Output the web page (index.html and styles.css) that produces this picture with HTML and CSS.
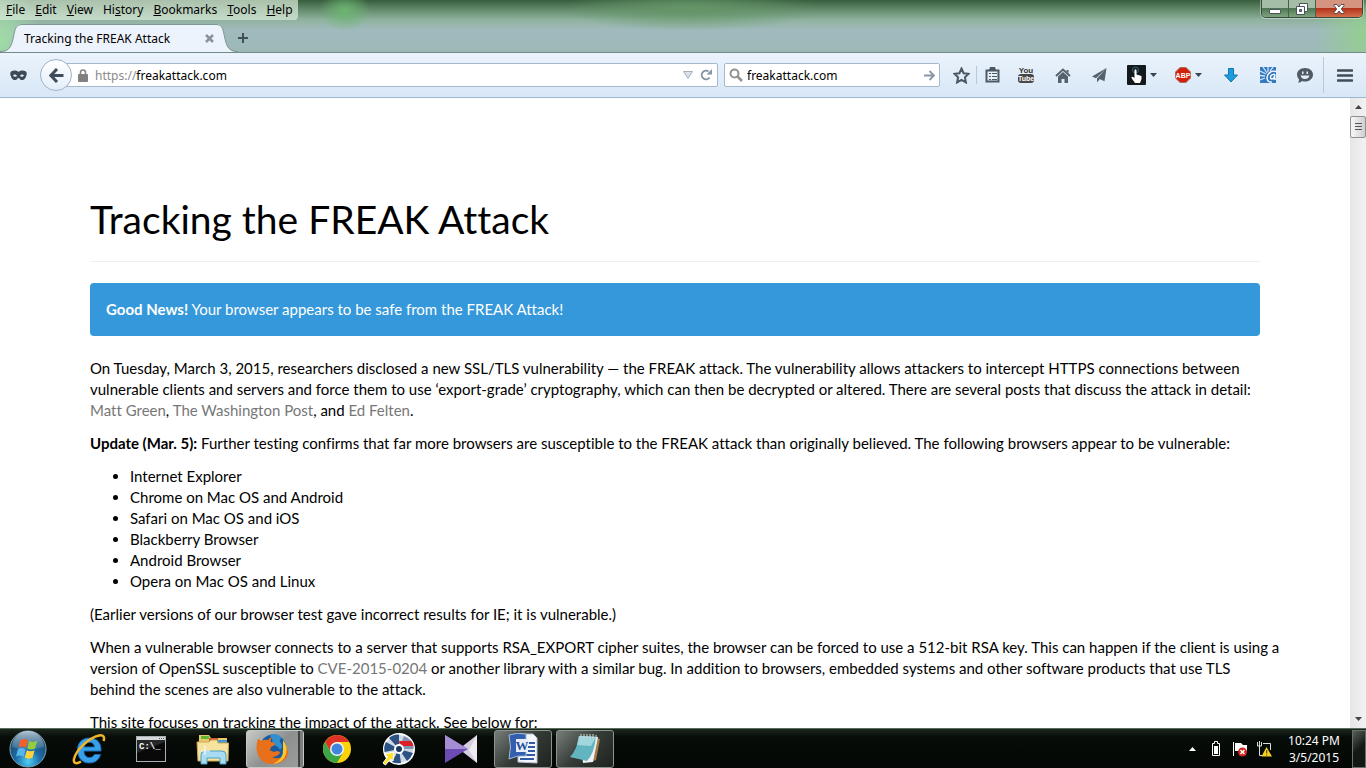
FILE: index.html
```
<!DOCTYPE html>
<html lang="en">
<head>
    <meta charset="utf-8">
    <title>Tracking the FREAK Attack</title>
    <link rel="stylesheet" href="styles.css">
</head>
<body>
    <header class="titlebar">
        <div class="title-row">
            <nav class="menubar">
                <button class="menu-item"><u>F</u>ile</button>
                <button class="menu-item"><u>E</u>dit</button>
                <button class="menu-item"><u>V</u>iew</button>
                <button class="menu-item">Hi<u>s</u>tory</button>
                <button class="menu-item"><u>B</u>ookmarks</button>
                <button class="menu-item"><u>T</u>ools</button>
                <button class="menu-item"><u>H</u>elp</button>
            </nav>
            <div class="window-controls">
                <button class="win-btn" aria-label="Minimize">
                    <svg width="14" height="12" viewBox="0 0 14 12"><rect x="1.500" y="6.500" width="11" height="4" rx="0.500" fill="#fff" stroke="#4a5560"/></svg>
                </button>
                <button class="win-btn" aria-label="Restore">
                    <svg width="14" height="14" viewBox="0 0 14 14"><path d="M4.500 1.500h8v8h-8z" fill="#fff" stroke="#4a5560"/><path d="M1.500 4.500h8v8h-8z" fill="#fff" stroke="#4a5560"/><path d="M4.500 7.500h2v2h-2z" fill="#6f9070" stroke="#4a5560"/></svg>
                </button>
                <button class="win-btn win-close" aria-label="Close">
                    <svg width="14" height="12" viewBox="0 0 14 12"><path d="M2 1.500h3l2 2.500 2-2.500h3v1L9.300 6l2.700 3.500v1H9L7 8l-2 2.500H2v-1L4.700 6 2 2.500z" fill="#fff" stroke="#5a4a50"/></svg>
                </button>
            </div>
        </div>
        <div class="tabs">
            <div class="tab">
                <svg class="tab-curve" width="22" height="28" viewBox="0 0 22 28"><path d="M0 28C8 28 11 24 13 15S15 0 22 0V28z" fill="#edf3fc"/><path d="M0 27.500C8 27.500 11 24 13 15S15 .5 22 .5" fill="none" stroke="#7d9792"/></svg>
                <div class="tab-body">
                    <span class="tab-title">Tracking the FREAK Attack</span>
                    <button class="tab-close" aria-label="Close tab">
                        <svg width="9" height="9" viewBox="0 0 9 9"><path d="M1 1l7 7M8 1l-7 7" stroke="#8a919b" stroke-width="2.500"/></svg>
                    </button>
                </div>
                <svg class="tab-curve" width="22" height="28" viewBox="0 0 22 28"><path d="M22 28C14 28 11 24 9 15S7 0 0 0V28z" fill="#edf3fc"/><path d="M22 27.500C14 27.500 11 24 9 15S7 .5 0 .5" fill="none" stroke="#7d9792"/></svg>
            </div>
            <button class="new-tab" aria-label="New tab">
                <svg width="10" height="10" viewBox="0 0 10 10"><path d="M5 0v10M0 5h10" stroke="#3f5058" stroke-width="2"/></svg>
            </button>
        </div>
    </header>

    <div class="toolbar">
        <div class="private">
            <svg width="17" height="11" viewBox="0 0 17 11"><path fill-rule="evenodd" d="M1 1.500C4 0 7 .5 8.500 2 10 .5 13 0 16 1.500c1 1 1 3 0 5-1 3-3 4-5 3.500C9.800 9.600 9.500 8 8.500 8S7.200 9.600 6 10C4 10.500 2 9.500 1 6.500 0 4.500 0 2.500 1 1.500zM3 5.500c1 1.500 3 1.700 4 .5C6 4 4 4 3 5.500zM10 6c1 1.200 3 1 4-.5-1-1.500-3-1.500-4 .5z" fill="#3f4a54"/></svg>
        </div>
        <button class="back" aria-label="Back">
            <svg width="15" height="15" viewBox="0 0 15 15"><path d="M8 1L1.800 7.500 8 14M2 7.500h12.500" fill="none" stroke="#3f4c59" stroke-width="3"/></svg>
        </button>
        <div class="field url-field">
            <svg width="10" height="13" viewBox="0 0 10 13"><path d="M2.500 6V3.500a2.500 2.500 0 0 1 5 0V6" fill="none" stroke="#858585" stroke-width="1.600"/><rect y="5" width="10" height="8" rx="1" fill="#808080"/></svg>
            <div class="address">
                <label class="scheme" for="url">https://</label>
                <input id="url" type="text" value="freakattack.com">
            </div>
            <button aria-label="Show history"><svg width="10" height="8" viewBox="0 0 10 8"><path d="M.5 .5h9L5 7.500z" fill="#dbe1e8" stroke="#a3afbb"/></svg></button>
            <button aria-label="Reload"><svg width="12" height="12" viewBox="0 0 12 12"><path d="M9.500 8.500A4.300 4.300 0 1 1 8.500 2.500" fill="none" stroke="#8796a5" stroke-width="2"/><path d="M6.500 5.500H12V0z" fill="#8796a5"/></svg></button>
        </div>
        <div class="field search-field">
            <svg width="14" height="14" viewBox="0 0 14 14"><circle cx="5.500" cy="5.500" r="4" fill="none" stroke="#919191" stroke-width="2"/><path d="M8.500 8.500l4.500 4.500" stroke="#919191" stroke-width="2.500"/></svg>
            <input id="search" type="text" value="freakattack.com" aria-label="Search">
            <button aria-label="Go"><svg width="11" height="11" viewBox="0 0 11 11"><path d="M0 5.500h9M5.500 1L10 5.500 5.500 10" fill="none" stroke="#8796a5" stroke-width="1.800"/></svg></button>
        </div>
        <button class="tool tool-small" aria-label="Bookmark this page">
            <svg width="17" height="17" viewBox="0 0 17 17"><path d="M8.500 1.500l2.100 4.700 5 .6-3.700 3.500 1 5.100-4.400-2.500-4.400 2.500 1-5.100L1.400 6.800l5-.6z" fill="none" stroke="#4c5864" stroke-width="2"/></svg>
        </button>
        <span class="divider"></span>
        <button class="tool tool-small" aria-label="Bookmarks">
            <svg width="15" height="16" viewBox="0 0 15 16"><path d="M1.500 3.500h12v11h-12z" fill="#e6eef8" stroke="#4c5864" stroke-width="2"/><path d="M4 3l1-3h5l1 3zM4 6h2v1H4zM4 9h2v1H4zM4 12h2v1H4zM7 6h5v1H7zM7 9h5v1H7zM7 12h5v1H7z" fill="#4c5864"/></svg>
        </button>
        <button class="tool" aria-label="YouTube">
            <svg width="18" height="18" viewBox="0 0 18 18"><rect x="1" y="8" width="16" height="9" rx="3" fill="#484848"/><text x="9" y="7" class="glyph glyph-you">You</text><text x="9" y="15" class="glyph glyph-tube">Tube</text></svg>
        </button>
        <button class="tool" aria-label="Home">
            <svg width="16" height="15" viewBox="0 0 16 15"><path d="M1 8l7-6.500L15 8" fill="none" stroke="#55616d" stroke-width="2"/><path d="M3 8.500L8 4l5 4.500V15H9.500v-4h-3v4H3zM11.500 2h2v3l-2-1.500z" fill="#55616d"/></svg>
        </button>
        <button class="tool" aria-label="Send page">
            <svg width="15" height="16" viewBox="0 0 15 16"><path d="M14.500 1L0 9.500l4 1.700zM14.500 1L5 11.500V15.500l2.200-2.800zM14.500 1L7 11.800l5.500 2.500z" fill="#55616d"/></svg>
        </button>
        <button class="tool tool-menu" aria-label="Hand tool">
            <svg width="19" height="20" viewBox="0 0 19 20"><rect width="19" height="20" rx="1" fill="#15191c"/><circle cx="8.500" cy="5" r="3" fill="none" stroke="#286c7d"/><path d="M7.500 5q1-1.500 2 0v4.500l5 1.500v3l-1.500 4H8l-3.500-5q0-2 1.500-1l1.500 1z" fill="#fff"/></svg>
            <svg width="7" height="4" viewBox="0 0 7 4"><path d="M0 0h7L3.500 4z" fill="#3b444d"/></svg>
        </button>
        <button class="tool tool-menu" aria-label="Adblock Plus">
            <svg width="16" height="16" viewBox="0 0 16 16"><path d="M5 .5h6L15.500 5v6L11 15.500H5L.5 11V5z" fill="#cf210b" stroke="#a96a60"/><text x="8" y="11" class="glyph glyph-abp">ABP</text></svg>
            <svg width="7" height="4" viewBox="0 0 7 4"><path d="M0 0h7L3.500 4z" fill="#3b444d"/></svg>
        </button>
        <button class="tool" aria-label="Downloads">
            <svg width="14" height="15" viewBox="0 0 14 15"><path d="M4.500 .5h5v6.500h4L7 14 .5 7h4z" fill="#1d9be0" stroke="#1274ad"/></svg>
        </button>
        <button class="tool" aria-label="Mail checker">
            <svg width="16" height="16" viewBox="0 0 16 16"><rect width="16" height="16" fill="#3579c2"/><path d="M0 4l6 3M3 0l4 6M8 0v5M13 0l-3 4M0 8.500l5 .5M0 13l5-2" stroke="#cfe2f5" stroke-width="1.300"/><path d="M16 4.500C11 3 7 7 7 10.500S9 15.500 12 15M15 7.500c-3-.5-4.500 1-4.500 3s2.500 2 3.500 0l1-3-.7 4.500H16" fill="none" stroke="#fff" stroke-width="1.400"/></svg>
        </button>
        <button class="tool" aria-label="Hello">
            <svg width="16" height="15" viewBox="0 0 16 15"><path d="M8 0c4.500 0 8 2.800 8 6.700S12.500 13.500 8 13.500q-1.500 0-3-.5-1.500 2-4 1.500 1.300-1.300 1-3Q0 9.500 0 6.700C0 2.800 3.500 0 8 0z" fill="#4f5a65"/><path d="M5 3.500h1.500V6H5zM9.500 3.500H11V6H9.500zM3.500 7.500h9q-1 3.500-4.500 3.500T3.500 7.500z" fill="#e4edf7"/></svg>
        </button>
        <span class="divider divider-tall"></span>
        <button class="tool tool-app" aria-label="Open menu">
            <svg width="16" height="13" viewBox="0 0 16 13"><path d="M1 1.500h14M1 6.500h14M1 11.500h14" stroke="#414c57" stroke-width="2.600" stroke-linecap="round"/></svg>
        </button>
    </div>

    <div class="viewport">
        <main class="page">
            <div class="container">
                <h1>Tracking the FREAK Attack</h1>
                <div class="alert"><strong>Good News!</strong> Your browser appears to be safe from the FREAK Attack!</div>
                <p>On Tuesday, March 3, 2015, researchers disclosed a new SSL/TLS vulnerability — the FREAK attack. The vulnerability allows attackers to intercept HTTPS connections between vulnerable clients and servers and force them to use ‘export-grade’ cryptography, which can then be decrypted or altered. There are several posts that discuss the attack in detail: <a href="#">Matt Green</a>, <a href="#">The Washington Post</a>, and <a href="#">Ed Felten</a>.</p>
                <p><strong>Update (Mar. 5):</strong> Further testing confirms that far more browsers are susceptible to the FREAK attack than originally believed. The following browsers appear to be vulnerable:</p>
                <ul>
                    <li>Internet Explorer</li>
                    <li>Chrome on Mac OS and Android</li>
                    <li>Safari on Mac OS and iOS</li>
                    <li>Blackberry Browser</li>
                    <li>Android Browser</li>
                    <li>Opera on Mac OS and Linux</li>
                </ul>
                <p>(Earlier versions of our browser test gave incorrect results for IE; it is vulnerable.)</p>
                <p>When a vulnerable browser connects to a server that supports RSA_EXPORT cipher suites, the browser can be forced to use a 512-bit RSA key. This can happen if the client is using a version of OpenSSL susceptible to <a href="#">CVE-2015-0204</a> or another library with a similar bug. In addition to browsers, embedded systems and other software products that use TLS<br>behind the scenes are also vulnerable to the attack.</p>
                <p>This site focuses on tracking the impact of the attack. See below for:</p>
            </div>
        </main>
        <div class="scrollbar">
            <button class="scroll-arrow" aria-label="Scroll up"><svg width="7" height="4" viewBox="0 0 7 4"><path d="M0 4h7L3.500 0z" fill="#444"/></svg></button>
            <div class="scroll-thumb"><svg width="7" height="8" viewBox="0 0 7 8"><path d="M0 .5h7M0 3.500h7M0 6.500h7" stroke="#555"/></svg></div>
            <button class="scroll-arrow scroll-down" aria-label="Scroll down"><svg width="7" height="4" viewBox="0 0 7 4"><path d="M0 0h7L3.500 4z" fill="#444"/></svg></button>
        </div>
    </div>

    <footer class="taskbar">
        <button class="start" aria-label="Start">
            <svg width="38" height="38" viewBox="0 0 38 38">
                <defs>
                    <radialGradient id="orb" cx="50%" cy="85%" r="75%"><stop offset="0" stop-color="#4fd0f5"/><stop offset=".45" stop-color="#1d6da8"/><stop offset="1" stop-color="#1c4263"/></radialGradient>
                    <linearGradient id="gloss" x1="0" y1="0" x2="0" y2="1"><stop offset="0" stop-color="#d5e4ec" stop-opacity=".8"/><stop offset="1" stop-color="#9fc4d8" stop-opacity=".2"/></linearGradient>
                </defs>
                <circle cx="19" cy="19" r="18" fill="url(#orb)" stroke="#7fa5b8"/>
                <path d="M3 17a16 16 0 0 1 32 0q-16 5-32 0z" fill="url(#gloss)"/>
                <path d="M11.500 10q4-2 7.500.5l-2 7.500q-3.500-2.500-7.500-.5z" fill="#f0602a"/>
                <path d="M20.300 11q4 2 8-.2l-2.300 7.700q-4 2-7.700-.3z" fill="#93ce3d"/>
                <path d="M9 19q4-2 7.500.5L14.500 27q-3.500-2.500-7.500-.5z" fill="#57b5ee"/>
                <path d="M17.900 20.200q3.700 2 7.700 0L23.500 27.700q-4 2-7.700-.2z" fill="#ffd23b"/>
            </svg>
        </button>
        <button class="task" aria-label="Internet Explorer">
            <svg width="34" height="32" viewBox="0 0 34 32"><path d="M29 18H12c0 4 2 6.500 5.500 6.500 2.300 0 4-1 5-3h6C27 27 23 30 17 30 10 30 5.500 24.500 5.500 17S10.500 5 17.500 5C25 5 29.500 10 29 18zM12 14h10.500c-.3-3-2-4.700-5-4.700S12.500 11 12 14z" fill="#39a1ea" stroke="#1d68b5"/><path d="M31.500 8C33 4 31.500 1.500 27 2.500 17 4.500 4 17 2 26c-1 5 3 5 7 2.500" fill="none" stroke="#efb526" stroke-width="2.500"/></svg>
        </button>
        <button class="task" aria-label="Command Prompt">
            <svg width="30" height="26" viewBox="0 0 30 26"><rect x=".5" y=".5" width="29" height="25" fill="#090909" stroke="#a9afb5"/><path d="M1 1h28v3H1z" fill="#d5d8db"/><path d="M23 2.500h1M25 2.500h1M27 2.500h1" stroke="#555"/><path d="M1 17L29 6V4H1z" fill="#555" opacity=".4"/><text x="3" y="13" class="glyph glyph-cmd">C:\_</text></svg>
        </button>
        <button class="task" aria-label="Windows Explorer">
            <svg width="34" height="32" viewBox="0 0 34 32"><path d="M3 5V2h10l2 3h16v23H2z" fill="#e8c96e"/><path d="M5 3h8v3H5z" fill="#5fb832"/><path d="M13 5h9v3h-9z" fill="#d6592d"/><path d="M21 7h10v3H21z" fill="#4298d0"/><path d="M1 9h12l2-2h6l1 3h10.500L32 28H2z" fill="#f6e3a0" stroke="#cda950"/><path d="M5 31V22q0-4 4-4h17q4 0 4 4v9h-6v-6H11v6z" fill="#a8dcf2" stroke="#4f9fc2"/><path d="M9 13v9M5 18h9" stroke="#fff" stroke-width="1"/></svg>
        </button>
        <button class="task task-current" aria-label="Firefox">
            <svg width="32" height="32" viewBox="0 0 32 32"><circle cx="17" cy="14.500" r="13" fill="#195b9e"/><path d="M14 2q7-3 12 3-3 1-2 4 4 4 0 8-3-5-7-5 0-5-3-10z" fill="#338fcf"/><path d="M2 6q1 0 3 2 3-2 7-1 1-2 4-3-2 3-1 5 3 0 4 2-1 2-4 3l-1 3q3 3 7 1 3 0 3 2-3 4-8 4 8 4 13-4 2-4 0-9 3 3 2 8 1-2 1-6 2 8-3 13.500Q24 31 16 31 6 31 2 22-1 14 2 6z" fill="#e8701a"/><path d="M27 7q5 6 3 14-3 9-13 10 11-5 10-15z" fill="#fac92e"/></svg>
            <span class="stack"></span>
        </button>
        <button class="task" aria-label="Chrome">
            <svg width="30" height="30" viewBox="0 0 30 30"><circle cx="15" cy="15" r="14" fill="#fcd20a"/><path d="M2.900 8A14 14 0 0 1 27.100 8H15L9 18.500z" fill="#df3224"/><path d="M2.900 8A14 14 0 0 0 15 29l6-10.500L15 22l-6-3.500z" fill="#3aa648"/><circle cx="15" cy="15" r="7" fill="#f4f4f4"/><circle cx="15" cy="15" r="5.500" fill="#3f86dd"/></svg>
        </button>
        <button class="task" aria-label="Disc tool">
            <svg width="34" height="34" viewBox="0 0 34 34"><circle cx="17" cy="17" r="15" fill="#cfd9e4" stroke="#fff" stroke-width="2"/><path d="M17 17L7 6q4-4 10-3.500zM17 17L2.500 20q-1-6 1.500-10zM17 17l14 4q-2 5-6 8zM17 17l2 14q-5 1-9-1z" fill="#2c5285"/><path d="M17 17l5-13q8 3 9.500 10v3z" fill="#8195b0"/><path d="M17 9h12q2 2 2.500 5H18z" fill="#dc1f26"/><circle cx="17" cy="17" r="5" fill="#fff"/><circle cx="17" cy="17" r="3" fill="#1b3763"/><path d="M3 22l9-2-1 9-2.500-2-5 6L1 31l4.500-6z" fill="#ffe02a" stroke="#fff"/></svg>
        </button>
        <button class="task" aria-label="Media player">
            <svg width="34" height="28" viewBox="0 0 34 28"><path d="M33 0v28L15 14z" fill="#d5cde0"/><path d="M33 0v28l-8-13z" fill="#eee9f3"/><path d="M1 0l23 14L1 28z" fill="#6c4bb4"/><path d="M1 0l23 14H1z" fill="#a48dd3"/></svg>
        </button>
        <button class="task task-open" aria-label="Word">
            <svg width="34" height="32" viewBox="0 0 34 32"><path d="M12 1h15l4 4v25l-19-1z" fill="#f4f6fa" stroke="#b5c2d6"/><path d="M23 10h6M22 14h7M21 18h8M14 22h15M14 26h14" stroke="#315aa5" stroke-width="2"/><path d="M3 2q8-3 17-1v22q-9-1-17 3 3-12 0-24z" fill="#345faf" stroke="#a1bcdf"/><rect x="10" y="6" width="12" height="13" fill="#e7eefa"/><text x="16" y="17" class="glyph glyph-word">W</text></svg>
        </button>
        <button class="task task-open" aria-label="Notepad">
            <svg width="34" height="32" viewBox="0 0 34 32"><path d="M28 5l4 1-4 21-5 2z" fill="#a57d4a"/><path d="M12 3l18 1-5 25-10 1z" fill="#edf2f4"/><path d="M11 3l17 1q-2 17-9 24L2 24Q9 17 11 3z" fill="#62b5c0"/><path d="M11 3l17 1-5 9-14-1z" fill="#a0d6dc"/><path d="M13 1v4M16 1v4M19 1v4M22 1v4M25 1v4M28 2v4" stroke="#d5d8da"/></svg>
        </button>
        <div class="tray">
            <button class="tray-btn" aria-label="Show hidden icons"><svg width="7" height="4" viewBox="0 0 7 4"><path d="M0 4h7L3.500 0z" fill="#fff"/></svg></button>
            <button class="tray-btn" aria-label="Battery"><svg width="10" height="15" viewBox="0 0 10 15"><path d="M1.500 2.500h2v-2h3v2h2v12h-7z" fill="none" stroke="#fff"/><path d="M3 5h4v8H3z" fill="#fff"/></svg></button>
            <button class="tray-btn" aria-label="Action Center"><svg width="16" height="16" viewBox="0 0 16 16"><path d="M1.500 1v14" stroke="#fff"/><path d="M3 2h6l2 2h4v6H3z" fill="#fff"/><circle cx="10.500" cy="11" r="4.500" fill="#d3261f"/><path d="M8.500 9l4 4M12.500 9l-4 4" stroke="#fff" stroke-width="1.500"/></svg></button>
            <button class="tray-btn" aria-label="Network"><svg width="16" height="16" viewBox="0 0 16 16"><path d="M1.500 1v4h4V1M3.500 0v14.500h4M7 2.500h7.500V9" fill="none" stroke="#ddd"/><path d="M10.500 6L16 15.500H5.500z" fill="#f5cf25"/><path d="M10.700 9v3.500M10.700 13.500v1" stroke="#4e410b"/></svg></button>
            <div class="clock"><time>10:24 PM</time><span>3/5/2015</span></div>
            <button class="show-desktop" aria-label="Show desktop"></button>
        </div>
    </footer>
</body>
</html>
```
FILE: styles.css
```
* {
    box-sizing: border-box;
}
body {
    margin: 0;
    height: 100vh;
    display: flex;
    flex-direction: column;
    overflow: hidden;
    font-family: "Noto Sans", "Open Sans", sans-serif;
    font-size: 12px;
    color: #000;
}
button {
    display: flex;
    align-items: center;
    justify-content: center;
    margin: 0;
    padding: 0;
    border: 0;
    background: none;
    font: inherit;
    color: inherit;
}
svg {
    display: block;
    flex: none;
}

/* window title and tabs */
.titlebar {
    flex: none;
    border-bottom: 1px solid #6f8c88;
    background:
        radial-gradient(ellipse 40px 60px at 0 40px, #9fdca4, transparent),
        radial-gradient(ellipse 50px 50px at 100% 35px, #94cf8f, transparent),
        radial-gradient(ellipse 26px 20px at 345px 11px, #6bb56f, transparent),
        radial-gradient(ellipse 130px 22px at 690px 9px, #659667, transparent),
        linear-gradient(#385d3d, #648c6d 10px, #90b3a0 20px, #a0babd 30px, #9db9b6);
}
.title-row {
    display: flex;
    justify-content: space-between;
    align-items: flex-start;
    height: 24px;
}
.menubar {
    display: flex;
    height: 20px;
    padding-left: 1px;
    border-radius: 0 0 4px 0;
    background: rgba(220, 235, 220, 0.7);
}
.menu-item {
    display: block;
    padding: 0 5px;
    line-height: 20px;
}
.window-controls {
    display: flex;
    margin-right: 3px;
    border: 1px solid #3a4a3d;
    border-top: 0;
    border-radius: 0 0 5px 5px;
    box-shadow: 0 0 0 1px rgba(255, 255, 255, 0.4);
    overflow: hidden;
}
.win-btn {
    width: 27px;
    height: 17px;
    border-right: 1px solid #47604b;
    background: linear-gradient(#a5bda6 50%, #4f7652 50%, #7ea57e);
}
.win-close {
    width: 46px;
    border-right: 0;
    background: linear-gradient(#d5947f 50%, #b4331b 50%, #d2704a);
}
.tabs {
    display: flex;
    height: 28px;
}
.tab {
    display: flex;
    width: 238px;
}
.tab-body {
    flex: 1;
    display: flex;
    align-items: center;
    justify-content: space-between;
    padding: 0 0 0 2px;
    border-top: 1px solid #7d9792;
    background: #edf3fc;
}
.tab-title {
    white-space: nowrap;
}
.tab-close {
    width: 14px;
    height: 14px;
}

/* navigation toolbar */
.toolbar {
    flex: none;
    display: flex;
    align-items: center;
    height: 45px;
    border-bottom: 1px solid #9fb6d2;
    background: linear-gradient(#ebf3fc, #d8e7f6);
}
.private {
    display: flex;
    justify-content: center;
    width: 36px;
}
.back {
    z-index: 1;
    width: 32px;
    height: 32px;
    margin-left: 4px;
    border: 1px solid #a0b2c6;
    border-radius: 50%;
    background: linear-gradient(#fff, #e4eef9);
}
.field {
    display: flex;
    align-items: center;
    height: 24px;
    border: 1px solid #a6b8cd;
    border-radius: 2px;
    background: #fff;
}
.field input {
    flex: 1;
    min-width: 0;
    padding: 0;
    border: 0;
    outline: 0;
    background: none;
    font: inherit;
    color: #000;
}
.url-field {
    flex: 1;
    margin-left: -16px;
    padding: 0 5px 0 21px;
    gap: 7px;
}
.address {
    flex: 1;
    display: flex;
}
.scheme {
    color: #8a8a8a;
}
.search-field {
    width: 216px;
    margin: 0 6px;
    padding: 0 4px;
    gap: 4px;
}
.tool {
    width: 37px;
    height: 30px;
}
.tool-small {
    width: 30px;
}
.tool-menu {
    width: 47px;
    gap: 4px;
}
.tool-app {
    width: 42px;
}
.divider {
    width: 1px;
    height: 18px;
    background: #b9c8da;
}
.divider-tall {
    height: 36px;
}

/* text inside icons */
.glyph {
    font-family: "Liberation Sans", sans-serif;
    font-weight: bold;
    text-anchor: middle;
    fill: #fff;
}
.glyph-you {
    font-size: 8px;
    fill: #333;
}
.glyph-tube {
    font-size: 7px;
}
.glyph-abp {
    font-size: 7px;
}
.glyph-cmd {
    font-family: "Liberation Mono", monospace;
    font-size: 9px;
    text-anchor: start;
}
.glyph-word {
    font-family: "Liberation Serif", serif;
    font-size: 13px;
    fill: #274e9b;
}

/* web page */
.viewport {
    flex: 1;
    min-height: 0;
    display: flex;
    background: #fff;
}
.page {
    flex: 1;
    overflow: hidden;
    padding: 94px 15px 0;
    font-family: Lato, sans-serif;
    font-size: 15px;
    font-variant-ligatures: none;
    line-height: 21px;
}
.container {
    max-width: 1170px;
    margin: 0 auto;
}
h1 {
    margin: 0 0 21px;
    padding-bottom: 15px;
    border-bottom: 1px solid #ecf0f1;
    font-size: 39px;
    font-weight: normal;
    line-height: 54px;
}
.alert {
    margin-bottom: 22px;
    padding: 16px;
    border-radius: 4px;
    background: #3498db;
    color: #fff;
}
p {
    margin: 0 -20px 12px 0;
}
ul {
    margin: 0 0 12px;
    padding-left: 40px;
}
.page a {
    color: #777;
    text-decoration: none;
}
.scrollbar {
    display: flex;
    flex-direction: column;
    width: 16px;
    background: linear-gradient(to right, #e6e6e6, #f2f2f2);
}
.scroll-arrow {
    height: 18px;
}
.scroll-down {
    margin-top: auto;
}
.scroll-thumb {
    display: flex;
    align-items: center;
    justify-content: center;
    height: 22px;
    border: 1px solid #909090;
    border-radius: 2px;
    background: linear-gradient(to right, #f7f7f7, #cfcfcf);
}

/* taskbar */
.taskbar {
    flex: none;
    display: flex;
    align-items: center;
    gap: 4px;
    height: 40px;
    border-top: 1px solid #58705b;
    background: linear-gradient(#1b271d, #070c08 8px, #040705);
    color: #fff;
}
.start {
    width: 56px;
}
.task {
    width: 58px;
    height: 38px;
}
.task-current,
.task-open {
    border: 1px solid #8d938e;
    border-radius: 3px;
    background: linear-gradient(135deg, #777d79, #343a36 50%, #1e231f);
}
.task-current {
    justify-content: flex-end;
    gap: 10px;
    border-color: #c4c8c5;
    background: linear-gradient(135deg, #c9cbc9, #8d908e 50%, #9b9e9c);
}
.stack {
    width: 5px;
    height: 36px;
    border-left: 2px solid #3c413d;
    background: #7c807d;
}
.tray {
    display: flex;
    align-items: center;
    margin-left: auto;
}
.tray-btn {
    width: 24px;
    height: 30px;
}
.clock {
    display: flex;
    flex-direction: column;
    align-items: center;
    width: 76px;
    line-height: 17px;
}
.show-desktop {
    width: 14px;
    height: 38px;
    border: 1px solid #69706b;
    background: linear-gradient(135deg, #59605b, #131814 50%);
}
```
